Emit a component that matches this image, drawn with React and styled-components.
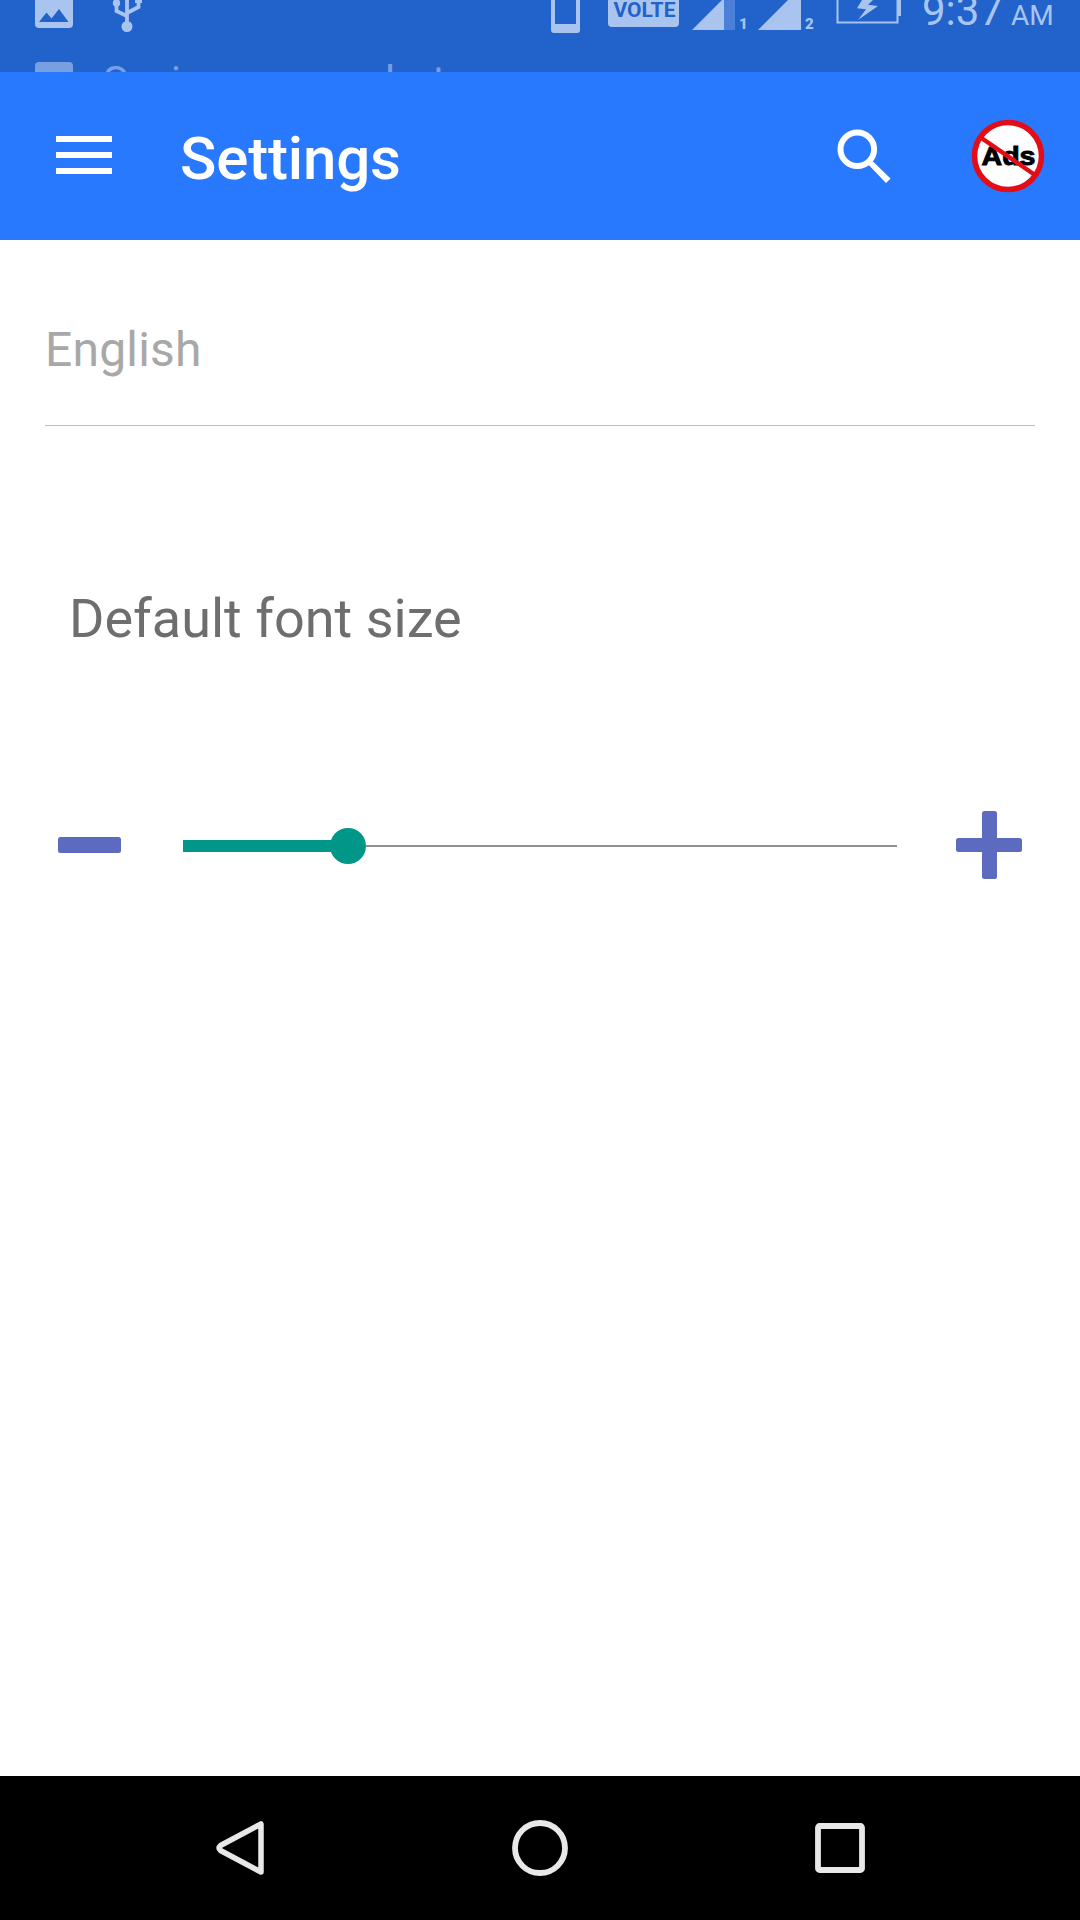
import React, { useState } from "react";
import styled, { createGlobalStyle } from "styled-components";

const GlobalStyle = createGlobalStyle`
  body { margin: 0; background: #fff; font-family: Roboto, "Noto Sans", sans-serif; }
  svg { display: block; flex: none; }
  button { appearance: none; border: 0; padding: 0; background: none; font: inherit; display: block; flex: none; }
`;

const Screen = styled.div`
  width: 1080px;
  height: 1920px;
  display: flex;
  flex-direction: column;
  overflow: hidden;
  background: #fff;
`;

const StatusBar = styled.header`
  flex: none;
  height: 72px;
  overflow: hidden;
  background: #2162cb;
  color: #a9c4ee;
`;

const StatusRow = styled.div`
  display: flex;
  align-items: flex-start;
  height: 62px;
  padding-left: 35px;
`;

const Spacer = styled.div`
  flex: none;
  width: ${(p) => p.$w}px;
`;

const VolteBadge = styled.div`
  width: 71px;
  height: 27px;
  flex: none;
  border-radius: 0 0 4px 4px;
  background: #a9c4ee;
  color: #2162cb;
  font-size: 21px;
  font-weight: 700;
  line-height: 20px;
  text-align: center;
  text-indent: 2px;
`;

const SimNumber = styled.span`
  flex: none;
  width: 13px;
  font-size: 15px;
  font-weight: 900;
  line-height: 48px;
`;

const Clock = styled.div`
  font-size: 42px;
  line-height: 22px;
  white-space: nowrap;
`;

const Meridiem = styled.span`
  margin-left: 8px;
  font-size: 28px;
`;

const TickerRow = styled.div`
  display: flex;
  height: 48px;
  padding-left: 35px;
  gap: 30px;
  color: #7a9fe0;
  font-size: 42px;
  line-height: 40px;
`;

const TickerIcon = styled.div`
  width: 38px;
  height: 38px;
  border-radius: 4px;
  background: #7a9fe0;
`;

const AppBar = styled.div`
  flex: none;
  display: flex;
  align-items: center;
  height: 168px;
  box-sizing: border-box;
  padding: 0 34px 0 56px;
  background: #2979ff;
`;

const MenuButton = styled.button`
  padding-bottom: 2px;
`;

const Title = styled.h1`
  flex: 1;
  margin: 0 0 0 68px;
  color: #fff;
  font-size: 60px;
  font-weight: 500;
  line-height: 70px;
  padding-top: 6px;
  letter-spacing: -0.15px;
`;

const Content = styled.main`
  flex: 1;
  padding: 0 45px;
`;

const LanguageField = styled.div`
  height: 186px;
  box-sizing: border-box;
  padding-top: 82px;
  border-bottom: 1px solid #bdbdbd;
  color: #a8a8a8;
  font-size: 48px;
  line-height: 56px;
  letter-spacing: 0.2px;
`;

const SectionLabel = styled.h2`
  margin: 161px 0 0 24px;
  color: #6e6e6e;
  font-size: 54px;
  font-weight: 400;
  line-height: 64px;
`;

const SliderRow = styled.div`
  display: flex;
  align-items: center;
  height: 70px;
  margin-top: 159px;
  padding: 0 13px;
`;

const Track = styled.div`
  display: flex;
  align-items: center;
  width: 714px;
  height: 36px;
  margin: 2px 59px 0 62px;
`;

const Filled = styled.div`
  height: 12px;
  background: #009688;
`;

const Thumb = styled.div`
  flex: none;
  width: 36px;
  height: 36px;
  margin-left: -5px;
  border-radius: 50%;
  background: #009688;
`;

const Remaining = styled.div`
  flex: 1;
  height: 2px;
  background: #909090;
`;

const NavBar = styled.nav`
  flex: none;
  display: flex;
  align-items: center;
  justify-content: space-between;
  height: 144px;
  box-sizing: border-box;
  padding: 0 210px;
  background: #000;
`;

const Signal = ({ partial }) => (
  <svg width="43" height="30" viewBox="0 0 43 30">
    {partial && <path d="M32 0h11v30H32z" fill="#4a80d7" />}
    <path d={partial ? "M0 30 30 0h2v30z" : "M0 30 30 0h13v30z"} fill="#a9c4ee" />
  </svg>
);

function StatusIcons() {
  return (
    <StatusRow>
      <svg width="38" height="28" viewBox="0 0 38 28">
        <path fill="#a9c4ee" fillRule="evenodd" d="M0 0h38v24q0 4-4 4H4q-4 0-4-4zM4 22h29.500L24 9l-7.500 9.500-5-6z" />
      </svg>
      <Spacer $w={38} />
      <svg width="32" height="34" viewBox="0 0 32 34">
        <g fill="none" stroke="#a9c4ee" strokeWidth="3.800">
          <path d="M16 0v26M5.500 2v9L16 16M27.500 2v5L16 13" />
        </g>
        <g fill="#a9c4ee">
          <circle cx="16" cy="26.500" r="5.500" />
          <circle cx="5.500" cy="3" r="3.700" />
          <path d="M24 0h7v3h-7z" />
        </g>
      </svg>
      <Spacer $w={408} />
      <svg width="29" height="33" viewBox="0 0 29 33">
        <path fill="#a9c4ee" d="M0 0h4v24h21V0h4v30q0 3-3 3H3q-3 0-3-3z" />
      </svg>
      <Spacer $w={28} />
      <VolteBadge>VOLTE</VolteBadge>
      <Spacer $w={13} />
      <Signal partial />
      <Spacer $w={4} />
      <SimNumber>1</SimNumber>
      <Spacer $w={6} />
      <Signal />
      <Spacer $w={4} />
      <SimNumber>2</SimNumber>
      <Spacer $w={18} />
      <svg width="65" height="24" viewBox="0 0 65 24">
        <path d="M1.500 0v22.500h60V0" fill="none" stroke="#a9c4ee" strokeWidth="2" />
        <path fill="#a9c4ee" d="M61 0h4v16h-4zM26 0l-5 8.300 9 1L22 20 42 6l-10-1.300L37 0z" />
      </svg>
      <Spacer $w={21} />
      <Clock>
        9:37<Meridiem>AM</Meridiem>
      </Clock>
    </StatusRow>
  );
}

function NoAds() {
  return (
    <svg width="76" height="76" viewBox="0 0 76 76">
      <circle cx="38" cy="38" r="33.500" fill="#fff" stroke="#e30d18" strokeWidth="5.600" />
      <text x="38.500" y="46.500" textAnchor="middle" textLength="54" lengthAdjust="spacingAndGlyphs" fontFamily="'Liberation Sans', Arial, sans-serif" fontWeight="700" fontSize="25" fill="#000" stroke="#000" strokeWidth="0.900">Ads</text>
      <path d="M10 19 65 57" stroke="#e30d18" strokeWidth="4.500" />
    </svg>
  );
}

function FontSlider() {
  const [value, setValue] = useState(147);
  const step = (d) => setValue((v) => Math.max(5, Math.min(678, v + d)));
  return (
    <SliderRow>
      <button aria-label="Decrease" onClick={() => step(-49)}>
        <svg width="63" height="70" viewBox="0 0 63 70">
          <rect y="27" width="63" height="16" rx="2.500" fill="#5c6bc0" />
        </svg>
      </button>
      <Track>
        <Filled style={{ width: value + 5 }} />
        <Thumb />
        <Remaining />
      </Track>
      <button aria-label="Increase" onClick={() => step(49)}>
        <svg width="66" height="70" viewBox="0 0 66 70">
          <rect y="28" width="66" height="14" rx="2.500" fill="#5c6bc0" />
          <rect x="26" y="1" width="15" height="68" rx="2.500" fill="#5c6bc0" />
        </svg>
      </button>
    </SliderRow>
  );
}

export default function App() {
  return (
    <Screen>
      <GlobalStyle />
      <StatusBar>
        <StatusIcons />
        <TickerRow>
          <TickerIcon />
          <span>Saving screenshot</span>
        </TickerRow>
      </StatusBar>
      <AppBar>
        <MenuButton aria-label="Menu">
          <svg width="56" height="38" viewBox="0 0 56 38">
            <path d="M0 0h56v6H0zM0 16h56v6H0zM0 32h56v6H0z" fill="#fff" />
          </svg>
        </MenuButton>
        <Title>Settings</Title>
        <button aria-label="Search">
          <svg width="54" height="54" viewBox="0 0 54 54">
            <circle cx="20.300" cy="20.300" r="16.800" fill="none" stroke="#fff" strokeWidth="6" />
            <path d="M31.500 35.800q-.3-3 1.500-3.300 1.500-1 3 0L53.500 49.500 49 54z" fill="#fff" />
          </svg>
        </button>
        <Spacer $w={79} />
        <button aria-label="Remove ads">
          <NoAds />
        </button>
      </AppBar>
      <Content>
        <LanguageField>English</LanguageField>
        <SectionLabel>Default font size</SectionLabel>
        <FontSlider />
      </Content>
      <NavBar>
        <svg width="60" height="60" viewBox="0 0 60 60">
          <path d="M51 6v48L10.500 32.500q-3-2.500 0-5z" fill="none" stroke="#e8e8e8" strokeWidth="5.500" strokeLinejoin="round" />
        </svg>
        <svg width="60" height="60" viewBox="0 0 60 60">
          <circle cx="30" cy="30" r="25" fill="none" stroke="#e8e8e8" strokeWidth="5.800" />
        </svg>
        <svg width="60" height="60" viewBox="0 0 60 60">
          <rect x="8" y="8" width="44" height="44" rx="1.500" fill="none" stroke="#e8e8e8" strokeWidth="5.800" />
        </svg>
      </NavBar>
    </Screen>
  );
}
